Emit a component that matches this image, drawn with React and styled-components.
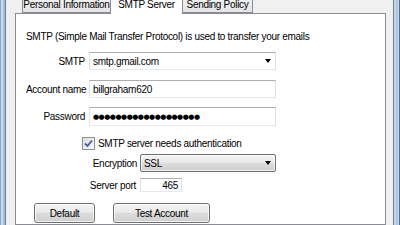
import React from "react";
import styled, { createGlobalStyle } from "styled-components";

const Global = createGlobalStyle`
  html, body { margin: 0; padding: 0; }
  body {
    width: 400px; height: 225px; overflow: hidden;
    font-family: "Liberation Sans", Arial, sans-serif;
    font-size: 10px; letter-spacing: -0.3px; color: #000; background: #f0f0f0;
  }
`;

const Window = styled.div`
  display: flex;
  width: 400px;
  height: 225px;
  overflow: hidden;
`;

const FrameLeft = styled.div`
  width: 6px;
  flex: none;
  background: linear-gradient(to right, #8fa6c0 0 1px, #c7dcf1 1px 3px, #a2c0e2 3px 5px, #6b7b90 5px 6px);
`;

const FrameRight = styled.div`
  width: 7px;
  flex: none;
  background: linear-gradient(to right, #6e7e94 0 1px, #c2d8ef 1px 3px, #a8c6e6 3px 5px, #c9dcef 5px 6px, #5a6a80 6px 7px);
`;

const Dialog = styled.div`
  flex: 1;
  display: flex;
  flex-direction: column;
  background: #f0f0f0;
  padding: 0 7px 0 9px;
  min-width: 0;
`;

const TabStrip = styled.div`
  display: flex;
  align-items: flex-end;
  height: 18px;
  margin-top: -5px;
  padding-left: 7px;
  position: relative;
  z-index: 1;
`;

const Tab = styled.div`
  box-sizing: border-box;
  width: ${(p) => p.$w}px;
  height: ${(p) => (p.$active ? 21 : 18)}px;
  margin-bottom: ${(p) => (p.$active ? -1 : 0)}px;
  margin-left: ${(p) => (p.$first ? 0 : -1)}px;
  border: 1px solid #898c95;
  border-bottom: ${(p) => (p.$active ? "none" : "1px solid #898c95")};
  background: ${(p) => (p.$active ? "#ffffff" : "linear-gradient(#f3f3f3, #e5e5e5)")};
  display: flex;
  align-items: flex-end;
  justify-content: center;
  padding-bottom: ${(p) => (p.$active ? 4 : 2)}px;
  line-height: 10px;
  white-space: nowrap;
  position: relative;
  z-index: ${(p) => (p.$active ? 2 : 1)};
`;

const Panel = styled.div`
  flex: 1;
  background: #ffffff;
  border: 1px solid #898c95;
  padding: 16px 0 0 10px;
`;

const Intro = styled.div`
  line-height: 14px;
  height: 14px;
  white-space: nowrap;
`;

const Row = styled.div`
  display: flex;
  align-items: center;
  height: ${(p) => p.$h || 18}px;
  margin-top: ${(p) => p.$mt}px;
`;

const Label = styled.div`
  width: ${(p) => p.$w}px;
  text-align: right;
  padding-right: ${(p) => p.$pr ?? 4}px;
  box-sizing: border-box;
  flex: none;
  white-space: nowrap;
`;

const TextBox = styled.div`
  box-sizing: border-box;
  width: ${(p) => p.$w}px;
  height: ${(p) => p.$h || 18}px;
  border: 1px solid;
  border-color: #abadb3 #dbdfe6 #e3e9ef #e2e3ea;
  background: #fff;
  display: flex;
  align-items: center;
  justify-content: ${(p) => (p.$right ? "flex-end" : "flex-start")};
  padding: 0 3px;
  white-space: nowrap;
  overflow: hidden;
`;

const EditCombo = styled(TextBox)`
  justify-content: space-between;
  padding-right: 4px;
`;

const Arrow = styled.span`
  width: 0;
  height: 0;
  border-left: 3.5px solid transparent;
  border-right: 3.5px solid transparent;
  border-top: 4px solid #000;
  flex: none;
`;

const DropCombo = styled.div`
  box-sizing: border-box;
  width: ${(p) => p.$w}px;
  height: 18px;
  border: 1px solid #707070;
  border-radius: 2px;
  background: linear-gradient(#f2f2f2 0%, #ebebeb 45%, #dddddd 50%, #cfcfcf 100%);
  box-shadow: inset 0 0 0 1px rgba(255,255,255,0.7);
  display: flex;
  align-items: center;
  justify-content: space-between;
  padding: 0 4px 0 3px;
`;

const Dots = styled.span`
  font-family: "DejaVu Sans", sans-serif;
  font-size: 7px;
  letter-spacing: -0.5px;
`;

const Check = styled.div`
  box-sizing: border-box;
  width: 13px;
  height: 13px;
  border: 1px solid #8e8f8f;
  background: linear-gradient(135deg, #dcdcdc, #fdfdfd);
  display: flex;
  align-items: center;
  justify-content: center;
  flex: none;
  margin-left: 56px;
  margin-right: 3px;
`;

const Buttons = styled.div`
  display: flex;
  gap: 18px;
  margin-top: 11px;
  padding-left: 8px;
`;

const Button = styled.div`
  box-sizing: border-box;
  width: ${(p) => p.$w}px;
  height: 20px;
  border: 1px solid #707070;
  border-radius: 3px;
  background: linear-gradient(#f2f2f2 0%, #ebebeb 45%, #dddddd 50%, #cfcfcf 100%);
  box-shadow: inset 0 0 0 1px rgba(255,255,255,0.75);
  display: flex;
  align-items: center;
  justify-content: center;
  white-space: nowrap;
`;

export default function App() {
  return (
    <>
      <Global />
      <Window>
        <FrameLeft />
        <Dialog>
          <TabStrip>
            <Tab $w={89} $first>Personal Information</Tab>
            <Tab $w={73} $active>SMTP Server</Tab>
            <Tab $w={71}>Sending Policy</Tab>
          </TabStrip>
          <Panel>
            <Intro>SMTP (Simple Mail Transfer Protocol) is used to transfer your emails</Intro>
            <Row $mt={8}>
              <Label $w={63}>SMTP</Label>
              <EditCombo $w={187}>
                <span>smtp.gmail.com</span>
                <Arrow />
              </EditCombo>
            </Row>
            <Row $mt={10}>
              <Label $w={63}>Account name</Label>
              <TextBox $w={187}>billgraham620</TextBox>
            </Row>
            <Row $mt={9} $h={19}>
              <Label $w={63}>Password</Label>
              <TextBox $w={187} $h={19}>
                <Dots>●●●●●●●●●●●●●●●●●●●</Dots>
              </TextBox>
            </Row>
            <Row $mt={10} $h={14}>
              <Check>
                <svg width="9" height="9" viewBox="0 0 9 9">
                  <path d="M1 4.5 L3.5 7 L8 1.5" fill="none" stroke="#3d5a9c" strokeWidth="1.8" />
                </svg>
              </Check>
              <span>SMTP server needs authentication</span>
            </Row>
            <Row $mt={4}>
              <Label $w={114} $pr={3}>Encryption</Label>
              <DropCombo $w={136}>
                <span>SSL</span>
                <Arrow />
              </DropCombo>
            </Row>
            <Row $mt={6} $h={14}>
              <Label $w={114} $pr={4}>Server port</Label>
              <TextBox $w={42} $h={14} $right>465</TextBox>
            </Row>
            <Buttons>
              <Button $w={61}>Default</Button>
              <Button $w={97}>Test Account</Button>
            </Buttons>
          </Panel>
        </Dialog>
        <FrameRight />
      </Window>
    </>
  );
}
